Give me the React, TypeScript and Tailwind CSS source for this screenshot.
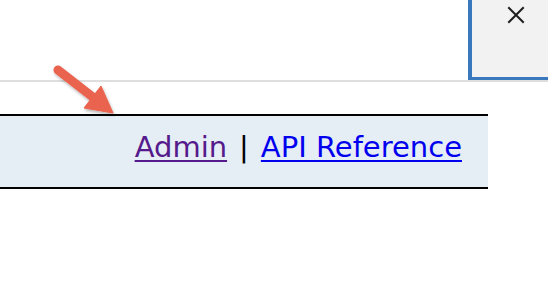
export default function App() {
  return (
    <div className="relative w-[548px] h-[286px] bg-white overflow-hidden font-['DejaVu_Sans',Verdana,sans-serif]">
      {/* top strip with dialog close box */}
      <div className="flex h-[80px]">
        <div className="flex-1" />
        <div className="w-[80px] h-[80px] bg-[#f2f2f2] border-l-4 border-b-[3px] border-[#3a78bd] flex justify-center pt-[4px] pl-[12px]">
          <svg width="20" height="20" viewBox="0 0 20 20" className="mt-[1px]">
            <path d="M3 3L17 17M17 3L3 17" stroke="#1f1f1f" strokeWidth="2" strokeLinecap="square" />
          </svg>
        </div>
      </div>
      <div className="h-[2px] bg-[#dedede]" />

      {/* links band */}
      <div className="mt-[32px] w-[488px] bg-[#e5edf5] border-y-2 border-black pt-[14px] pb-[23px] pr-[26px] flex justify-end text-[29px] leading-[34px]">
        <a href="#" className="text-[#551a8b] underline decoration-[2px] underline-offset-[3px]">Admin</a>
        <span className="text-black mx-[12px]">|</span>
        <a href="#" className="text-[#0000ee] underline decoration-[2px] underline-offset-[3px]">API Reference</a>
      </div>

      {/* callout arrow */}
      <svg className="absolute left-0 top-0" width="140" height="130" viewBox="0 0 140 130">
        <defs>
          <filter id="sh" x="-20%" y="-20%" width="150%" height="150%">
            <feDropShadow dx="1" dy="2" stdDeviation="1.5" floodColor="#000" floodOpacity="0.3" />
          </filter>
        </defs>
        <g filter="url(#sh)" fill="#e9634f" stroke="#e9634f">
          <line x1="58" y1="70" x2="94" y2="98" strokeWidth="9" strokeLinecap="round" />
          <polygon points="113,113 84,108 101,86" strokeWidth="1" strokeLinejoin="round" />
        </g>
      </svg>
    </div>
  );
}
